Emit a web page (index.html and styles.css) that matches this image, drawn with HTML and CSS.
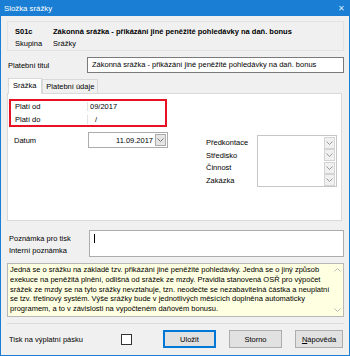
FILE: index.html
```html
<!DOCTYPE html>
<html lang="cs">
<head>
    <meta charset="UTF-8">
    <meta name="viewport" content="width=device-width, initial-scale=1.0">
    <title>Složka srážky</title>
    <link rel="stylesheet" href="styles.css">
</head>
<body>
    <div class="window">
        <div class="titlebar">
            <span class="title">Složka srážky</span>
            <span class="close">✕</span>
        </div>
        <div class="content">
            <div class="header">
                <div class="header-row"><b class="code">S01c</b><b>Zákonná srážka - přikázání jiné peněžité pohledávky na daň. bonus</b></div>
                <div class="header-row"><span class="code">Skupina</span><span>Srážky</span></div>
            </div>

            <div class="field-row">
                <label class="label">Platební titul</label>
                <div class="input">Zákonná srážka - přikázání jiné peněžité pohledávky na daň. bonus</div>
            </div>

            <div class="tabs">
                <div class="tab active">Srážka</div>
                <div class="tab">Platební údaje</div>
            </div>
            <div class="tab-panel">
                <div class="period">
                    <div class="period-row"><span class="period-label">Platí od</span><span class="period-value">09/2017</span></div>
                    <div class="period-row"><span class="period-label">Platí do</span><span class="period-value slash">/</span></div>
                </div>
                <div class="panel-body">
                    <div class="date-row">
                        <span class="date-label">Datum</span>
                        <div class="date-input">
                            <span class="date-text">11.09.2017</span>
                            <span class="drop"><svg width="7" height="4" viewBox="0 0 7 4"><path d="M0.5 0.5 L3.5 3.5 L6.5 0.5" fill="none" stroke="#777" stroke-width="1"/></svg></span>
                        </div>
                    </div>
                    <div class="accounts">
                        <div class="acc-labels">
                            <span>Předkontace</span>
                            <span>Středisko</span>
                            <span>Činnost</span>
                            <span>Zakázka</span>
                        </div>
                        <div class="acc-box">
                            <div class="acc-row"><span class="drop"><svg width="7" height="4" viewBox="0 0 7 4"><path d="M0.5 0.5 L3.5 3.5 L6.5 0.5" fill="none" stroke="#999" stroke-width="1"/></svg></span></div>
                            <div class="acc-row"><span class="drop"><svg width="7" height="4" viewBox="0 0 7 4"><path d="M0.5 0.5 L3.5 3.5 L6.5 0.5" fill="none" stroke="#999" stroke-width="1"/></svg></span></div>
                            <div class="acc-row"><span class="drop"><svg width="7" height="4" viewBox="0 0 7 4"><path d="M0.5 0.5 L3.5 3.5 L6.5 0.5" fill="none" stroke="#999" stroke-width="1"/></svg></span></div>
                            <div class="acc-row"><span class="drop"><svg width="7" height="4" viewBox="0 0 7 4"><path d="M0.5 0.5 L3.5 3.5 L6.5 0.5" fill="none" stroke="#999" stroke-width="1"/></svg></span></div>
                        </div>
                    </div>
                </div>
            </div>

            <div class="notes">
                <div class="note-labels">
                    <span>Poznámka pro tisk</span>
                    <span>Interní poznámka</span>
                </div>
                <div class="note-input"><span class="caret"></span></div>
            </div>

            <div class="info">
                <p>Jedná se o srážku na základě tzv. přikázání jiné peněžité pohledávky. Jedná se o jiný způsob exekuce na peněžitá plnění, odlišná od srážek ze mzdy. Pravidla stanovená OSŘ pro výpočet srážek ze mzdy se na tyto srážky nevztahuje, tzn. neodečte se nezabavitelná částka a neuplatní se tzv. třetinový systém. Výše srážky bude v jednotlivých měsících doplněna automaticky programem, a to v závislosti na vypočteném daňovém bonusu.</p>
                <div class="scroll">
                    <svg width="7" height="4" viewBox="0 0 7 4"><path d="M0.5 3.5 L3.5 0.5 L6.5 3.5" fill="none" stroke="#bbb" stroke-width="1"/></svg>
                    <svg width="7" height="4" viewBox="0 0 7 4"><path d="M0.5 0.5 L3.5 3.5 L6.5 0.5" fill="none" stroke="#bbb" stroke-width="1"/></svg>
                </div>
            </div>

            <div class="footer">
                <span class="print-label">Tisk na výplatní pásku</span>
                <span class="checkbox"></span>
                <div class="buttons">
                    <button class="btn default">Uložit</button>
                    <button class="btn">Storno</button>
                    <button class="btn"><u>N</u>ápověda</button>
                </div>
            </div>
        </div>
    </div>
</body>
</html>
```

FILE: styles.css
```css
body {
    margin: 0;
    font-family: "Liberation Sans", Arial, sans-serif;
    font-size: 7.5px;
    color: #000;
}
.window {
    width: 350px;
    height: 356px;
    box-sizing: border-box;
    border: 1px solid #1a7fd4;
    border-top: none;
    background: #f0f0f0;
    display: flex;
    flex-direction: column;
}
.titlebar {
    height: 16px;
    background: #1a7fd4;
    color: #fff;
    display: flex;
    align-items: center;
    justify-content: space-between;
    padding: 0 4px 0 3px;
    font-size: 7.8px;
}
.close {
    font-size: 8px;
    color: #dbe9f7;
}
.content {
    flex: 1;
    padding: 5px 5px 0 6px;
    display: flex;
    flex-direction: column;
}
.header {
    border: 1px solid #e3e3e3;
    background: #f0f0f0;
    padding: 5px 0 3px 7px;
    height: 30px;
    box-sizing: border-box;
    display: flex;
    flex-direction: column;
    gap: 2px;
}
.header-row {
    display: flex;
    line-height: 10px;
}
.code {
    width: 38px;
}
.field-row {
    display: flex;
    align-items: center;
    margin-top: 6px;
}
.label {
    width: 79px;
    padding-left: 1px;
}
.input {
    flex: 1;
    height: 16px;
    box-sizing: border-box;
    border: 1px solid #7a7a7a;
    background: #fff;
    padding: 0 4px;
    line-height: 14px;
}
.tabs {
    display: flex;
    margin-top: 5px;
    height: 15px;
    align-items: flex-end;
}
.tab {
    height: 13px;
    line-height: 13px;
    padding: 0 3px;
    border: 1px solid #d9d9d9;
    border-bottom: none;
    background: #f0f0f0;
}
.tab.active {
    height: 15px;
    line-height: 14px;
    background: #fff;
    padding: 0 5px 0 4px;
    margin-left: 1px;
    position: relative;
    top: 1px;
}
.tab-panel {
    height: 128px;
    box-sizing: border-box;
    border: 1px solid #d9d9d9;
    background: #fff;
    margin-right: 2px;
    padding: 5px 0 0 1px;
}
.period {
    width: 158px;
    height: 28px;
    box-sizing: border-box;
    border: 2px solid #e81123;
    display: flex;
    flex-direction: column;
    justify-content: center;
    gap: 4px;
}
.period-row {
    display: flex;
    line-height: 9px;
}
.period-label {
    width: 77px;
    padding-left: 4px;
    box-sizing: border-box;
    border-right: 1px solid #e2e2e2;
}
.period-value {
    padding-left: 2px;
}
.period-value.slash {
    padding-left: 7px;
}
.panel-body {
    display: flex;
    margin-top: 5px;
}
.date-row {
    display: flex;
    align-items: center;
    height: 16px;
    align-self: flex-start;
}
.date-label {
    width: 79px;
    padding-left: 5px;
    box-sizing: border-box;
}
.date-input {
    width: 80px;
    height: 16px;
    box-sizing: border-box;
    border: 1px solid #acacac;
    display: flex;
    align-items: center;
    justify-content: flex-end;
    padding-right: 1px;
}
.date-text {
    padding-right: 2px;
}
.drop {
    width: 11px;
    height: 12px;
    box-sizing: border-box;
    border: 1px solid #adadad;
    background: #e5e5e5;
    display: flex;
    align-items: center;
    justify-content: center;
}
.accounts {
    display: flex;
    margin-left: 38px;
    margin-top: 3px;
}
.acc-labels {
    width: 51px;
    display: flex;
    flex-direction: column;
    padding-top: 2px;
    line-height: 12.6px;
}
.acc-box {
    width: 80px;
    height: 52px;
    box-sizing: border-box;
    border: 1px solid #c6c6c6;
    display: flex;
    flex-direction: column;
    padding: 1px 1px 0 0;
}
.acc-row {
    height: 12.5px;
    display: flex;
    justify-content: flex-end;
}
.acc-row .drop {
    background: #f0f0f0;
    border-color: #d4d4d4;
    height: 12px;
}
.notes {
    display: flex;
    margin-top: 9px;
}
.note-labels {
    width: 80px;
    display: flex;
    flex-direction: column;
    padding: 3px 0 0 2px;
    line-height: 12px;
}
.note-input {
    flex: 1;
    height: 27px;
    box-sizing: border-box;
    border: 1px solid #acacac;
    background: #fff;
    padding: 3px 4px;
}
.caret {
    display: block;
    width: 1px;
    height: 9px;
    background: #000;
}
.info {
    margin-top: 6px;
    height: 54px;
    box-sizing: border-box;
    border: 1px solid #b8b8b8;
    background: #ffffe1;
    display: flex;
}
.info p {
    margin: 0;
    flex: 1;
    padding: 1px 2px 0 2px;
    line-height: 9.8px;
    font-size: 7.5px;
}
.scroll {
    width: 11px;
    display: flex;
    flex-direction: column;
    justify-content: space-between;
    align-items: center;
    padding: 4px 0;
}
.footer {
    margin-top: 6px;
    border-top: 1px solid #dcdcdc;
    display: flex;
    align-items: center;
    height: 30px;
    padding-left: 2px;
}
.print-label {
    width: 112px;
}
.checkbox {
    width: 9px;
    height: 9px;
    border: 1px solid #333;
    background: #fff;
}
.buttons {
    margin-left: auto;
    display: flex;
    gap: 13px;
    margin-right: 1px;
}
.btn {
    font-family: inherit;
    font-size: 7.5px;
    width: 53px;
    height: 18px;
    border: 1px solid #adadad;
    background: #e1e1e1;
    padding: 0;
}
.btn.default {
    border: 2px solid #0078d7;
}
.btn:last-child {
    width: 48px;
}
```
